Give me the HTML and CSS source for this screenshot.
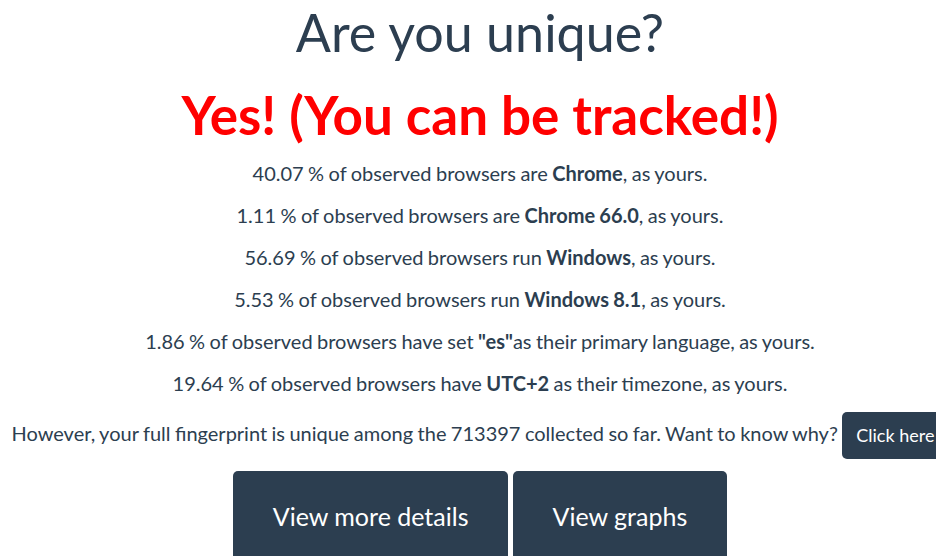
FILE: index.html
```html
<!DOCTYPE html>
<html lang="en">
<head>
<meta charset="utf-8">
<title>Are you unique?</title>
<link rel="stylesheet" href="styles.css">
</head>
<body>
<main class="page">
  <h1 class="title">Are you unique?</h1>
  <h2 class="verdict">Yes! (You can be tracked!)</h2>
  <p class="stat">40.07 % of observed browsers are <strong>Chrome</strong>, as yours.</p>
  <p class="stat">1.11 % of observed browsers are <strong>Chrome 66.0</strong>, as yours.</p>
  <p class="stat">56.69 % of observed browsers run <strong>Windows</strong>, as yours.</p>
  <p class="stat">5.53 % of observed browsers run <strong>Windows 8.1</strong>, as yours.</p>
  <p class="stat">1.86 % of observed browsers have set <strong>"es"</strong>as their primary language, as yours.</p>
  <p class="stat">19.64 % of observed browsers have <strong>UTC+2</strong> as their timezone, as yours.</p>
  <p class="summary">However, your full fingerprint is unique among the 713397 collected so far. Want to know why? <a class="btn btn-small" href="#">Click here</a></p>
  <div class="actions">
    <a class="btn btn-large" href="#">View more details</a>
    <a class="btn btn-large" href="#">View graphs</a>
  </div>
</main>
</body>
</html>
```
FILE: styles.css
```css
html, body {
  margin: 0;
  padding: 0;
  background: #fff;
  overflow: hidden;
}

body {
  font-family: Lato, "Open Sans", sans-serif;
  color: #2c3e50;
}

.page {
  width: 960px;
  text-align: center;
}

.title {
  font-size: 52px;
  font-weight: 400;
  line-height: 57px;
  margin: 4px 0 0;
}

.verdict {
  font-size: 53px;
  font-weight: 700;
  color: #ff0000;
  line-height: 58px;
  margin: 25px 0 0;
}

.stat {
  font-size: 20px;
  line-height: 26px;
  word-spacing: -0.7px;
  margin: 0 0 16px;
}

.verdict + .stat {
  margin-top: 16px;
}

.stat strong {
  font-weight: 700;
}

.summary {
  font-size: 20px;
  line-height: 26px;
  word-spacing: -0.7px;
  margin: 0;
}

.btn {
  display: inline-block;
  background: #2c3e50;
  color: #fff;
  text-decoration: none;
  border-radius: 5px;
  word-spacing: normal;
}

.btn-small {
  font-size: 18px;
  line-height: 25px;
  padding: 11px 14px;
  vertical-align: middle;
}

.actions {
  margin-top: 12px;
}

.btn-large {
  font-size: 25px;
  line-height: 30px;
  padding: 30px 40px;
}
```
